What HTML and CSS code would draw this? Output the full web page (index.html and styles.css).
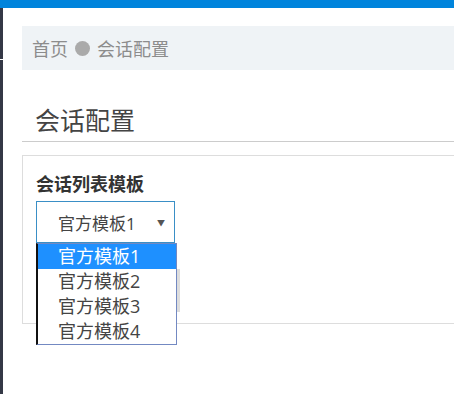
FILE: index.html
```html
<!DOCTYPE html>
<html lang="zh-CN">
<head>
  <meta charset="UTF-8" />
  <title>会话配置</title>
  <link rel="stylesheet" href="styles.css">
</head>
<body>
  <div class="topbar"></div>
  <div class="layout">
    <div class="sidebar"><div class="sidebar-line"></div></div>
    <div class="main">
      <div class="breadcrumb">
        <span>首页</span>
        <span class="dot"></span>
        <span>会话配置</span>
      </div>

      <div class="page-head">
        <h2>会话配置</h2>
      </div>

      <div class="panel">
        <label class="field-label">会话列表模板</label>
        <div class="select-wrap">
          <div class="select">
            <span>官方模板1</span>
            <span class="arrow">▼</span>
          </div>
          <!-- 展开的下拉列表 -->
          <ul class="options">
            <li class="selected">官方模板1</li>
            <li>官方模板2</li>
            <li>官方模板3</li>
            <li>官方模板4</li>
          </ul>
        </div>
        <button class="btn-save" aria-label="保存"></button>
      </div>
    </div>
  </div>
</body>
</html>
```

FILE: styles.css
```css
body {
  margin: 0;
  padding: 0;
  background: #fff;
  font-family: "Open Sans", "Noto Sans CJK SC", sans-serif;
  color: #333;
  overflow: hidden;
}

.topbar {
  height: 8px;
  background-color: #0084dc;
}

.layout {
  display: flex;
  min-height: 386px;
}

.sidebar {
  width: 3px;
  background-color: #343846;
  flex-shrink: 0;
}

.sidebar-line {
  height: 1px;
  margin-top: 51px;
  background: #fff;
}

.main {
  flex: 1;
  padding-left: 19px;
}

.breadcrumb {
  margin-top: 18px;
  height: 44px;
  background-color: #eff3f6;
  display: flex;
  align-items: center;
  gap: 7px;
  padding-left: 10px;
  font-size: 18px;
  color: #8c8c8c;
}

.breadcrumb .dot {
  width: 15px;
  height: 15px;
  border-radius: 50%;
  background-color: #aaa;
}

.page-head {
  height: 71px;
  border-bottom: 1px solid #ccc;
  display: flex;
  align-items: flex-end;
  padding-left: 13px;
}

.page-head h2 {
  margin: 0 0 4px;
  font-size: 25px;
  font-weight: normal;
  color: #444;
}

.panel {
  margin-top: 13px;
  border: 1px solid #ddd;
  border-right: none;
  padding: 16px 13px 12px;
  height: 139px;
}

.field-label {
  display: block;
  font-size: 18px;
  font-weight: bold;
  color: #333;
  line-height: 24px;
  margin-bottom: 5px;
}

.select-wrap {
  position: relative;
  width: 139px;
}

.select {
  height: 40px;
  border: 1px solid #3a8fc6;
  display: flex;
  align-items: center;
  justify-content: space-between;
  padding: 0 9px 0 21px;
  font-size: 17px;
  color: #444;
}

.select .arrow {
  font-size: 8px;
  color: #555;
}

.options {
  position: absolute;
  top: 42px;
  left: 0;
  width: 138px;
  margin: 0;
  padding: 0;
  list-style: none;
  background: #fff;
  border: 1px solid #7389c2;
  border-left: 2px solid #111;
  z-index: 2;
}

.options li {
  height: 25px;
  line-height: 25px;
  padding-left: 20px;
  font-size: 18px;
  color: #444;
}

.options li.selected {
  background-color: #1e90ff;
  color: #fff;
}

.btn-save {
  display: block;
  margin-top: 26px;
  width: 144px;
  height: 43px;
  border: none;
  background-color: #ddd;
}
```
